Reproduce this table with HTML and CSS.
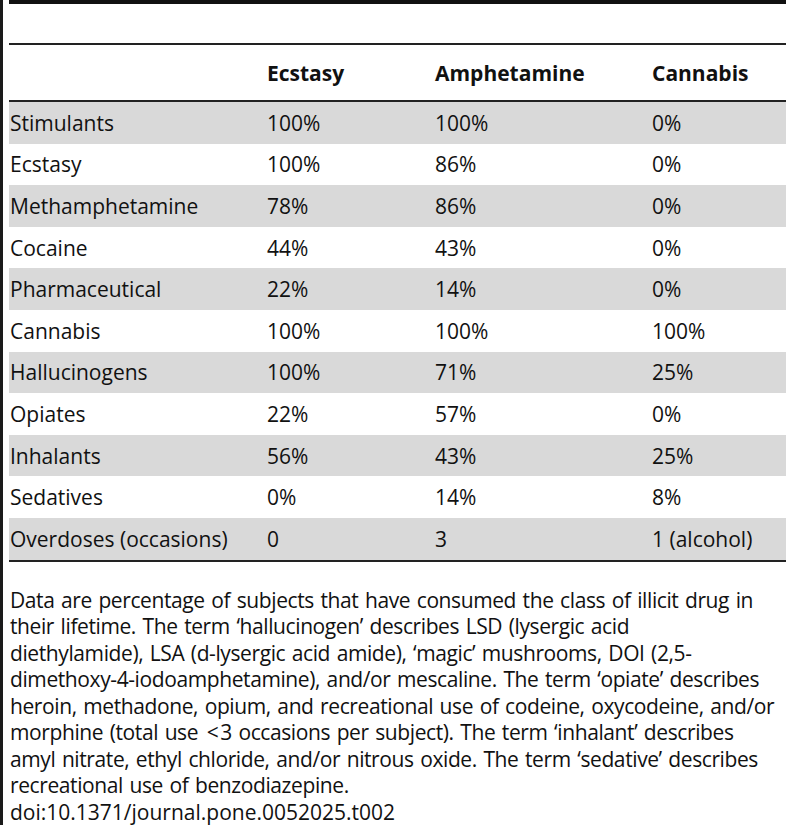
FILE: index.html
```html
<!DOCTYPE html>
<html lang="en">
<head>
  <meta charset="UTF-8">
  <meta name="viewport" content="width=device-width, initial-scale=1.0">
  <title>Table 2 - Illicit drug use</title>
  <link rel="stylesheet" href="styles.css">
</head>
<body>
  <div class="table-wrap">
    <table class="drug-table">
      <thead>
        <tr class="caption-row">
          <th colspan="4"></th>
        </tr>
        <tr class="head-row">
          <th class="col-name"></th>
          <th class="col-ecstasy">Ecstasy</th>
          <th class="col-amph">Amphetamine</th>
          <th class="col-cannabis">Cannabis</th>
        </tr>
      </thead>
      <tbody>
        <tr class="shade"><td>Stimulants</td><td>100%</td><td>100%</td><td>0%</td></tr>
        <tr><td>Ecstasy</td><td>100%</td><td>86%</td><td>0%</td></tr>
        <tr class="shade"><td>Methamphetamine</td><td>78%</td><td>86%</td><td>0%</td></tr>
        <tr><td>Cocaine</td><td>44%</td><td>43%</td><td>0%</td></tr>
        <tr class="shade"><td>Pharmaceutical</td><td>22%</td><td>14%</td><td>0%</td></tr>
        <tr><td>Cannabis</td><td>100%</td><td>100%</td><td>100%</td></tr>
        <tr class="shade"><td>Hallucinogens</td><td>100%</td><td>71%</td><td>25%</td></tr>
        <tr><td>Opiates</td><td>22%</td><td>57%</td><td>0%</td></tr>
        <tr class="shade"><td>Inhalants</td><td>56%</td><td>43%</td><td>25%</td></tr>
        <tr><td>Sedatives</td><td>0%</td><td>14%</td><td>8%</td></tr>
        <tr class="shade"><td>Overdoses (occasions)</td><td>0</td><td>3</td><td>1 (alcohol)</td></tr>
      </tbody>
    </table>

    <p class="note">Data are percentage of subjects that have consumed the class of illicit drug in<br>
      their lifetime. The term &lsquo;hallucinogen&rsquo; describes LSD (lysergic acid<br>
      diethylamide), LSA (d-lysergic acid amide), &lsquo;magic&rsquo; mushrooms, DOI (2,5-<br>
      dimethoxy-4-iodoamphetamine), and/or mescaline. The term &lsquo;opiate&rsquo; describes<br>
      heroin, methadone, opium, and recreational use of codeine, oxycodeine, and/or<br>
      morphine (total use <span class="lt">&lt;</span>3 occasions per subject). The term &lsquo;inhalant&rsquo; describes<br>
      amyl nitrate, ethyl chloride, and/or nitrous oxide. The term &lsquo;sedative&rsquo; describes<br>
      recreational use of benzodiazepine.</p>
    <p class="doi">doi:10.1371/journal.pone.0052025.t002</p>
  </div>
</body>
</html>
```

FILE: styles.css
```css
body {
  margin: 0;
  font-family: "Open Sans", "Noto Sans", sans-serif;
  color: #111;
  background: #fff;
}

.table-wrap {
  border-left: 3px solid #1a1a1a;
  padding-left: 6px;
}

.drug-table {
  width: 100%;
  border-collapse: collapse;
  border-top: 4px solid #111;
  font-size: 21px;
}

.caption-row th {
  height: 39px;
  padding: 0;
  border-bottom: 2px solid #222;
}

.head-row th {
  height: 55px;
  padding: 0;
  text-align: left;
  font-weight: 700;
  border-bottom: 2px solid #222;
}

.col-name { width: 258px; }
.col-ecstasy { width: 168px; }
.col-amph { width: 217px; }

.drug-table td {
  height: 41.6px;
  padding: 0;
  text-align: left;
  vertical-align: middle;
}

.drug-table td:first-child {
  padding-left: 1px;
}

.drug-table tbody tr:last-child td {
  border-bottom: 2px solid #222;
}

.shade {
  background-color: #d9d9d9;
}

.note,
.doi {
  margin: 0;
  padding-left: 1px;
  font-size: 21px;
  line-height: 26.5px;
  white-space: nowrap;
}

.note {
  margin-top: 25px;
  letter-spacing: -0.4px;
  word-spacing: 1.5px;
}

.lt {
  padding: 0 2px;
}
```
